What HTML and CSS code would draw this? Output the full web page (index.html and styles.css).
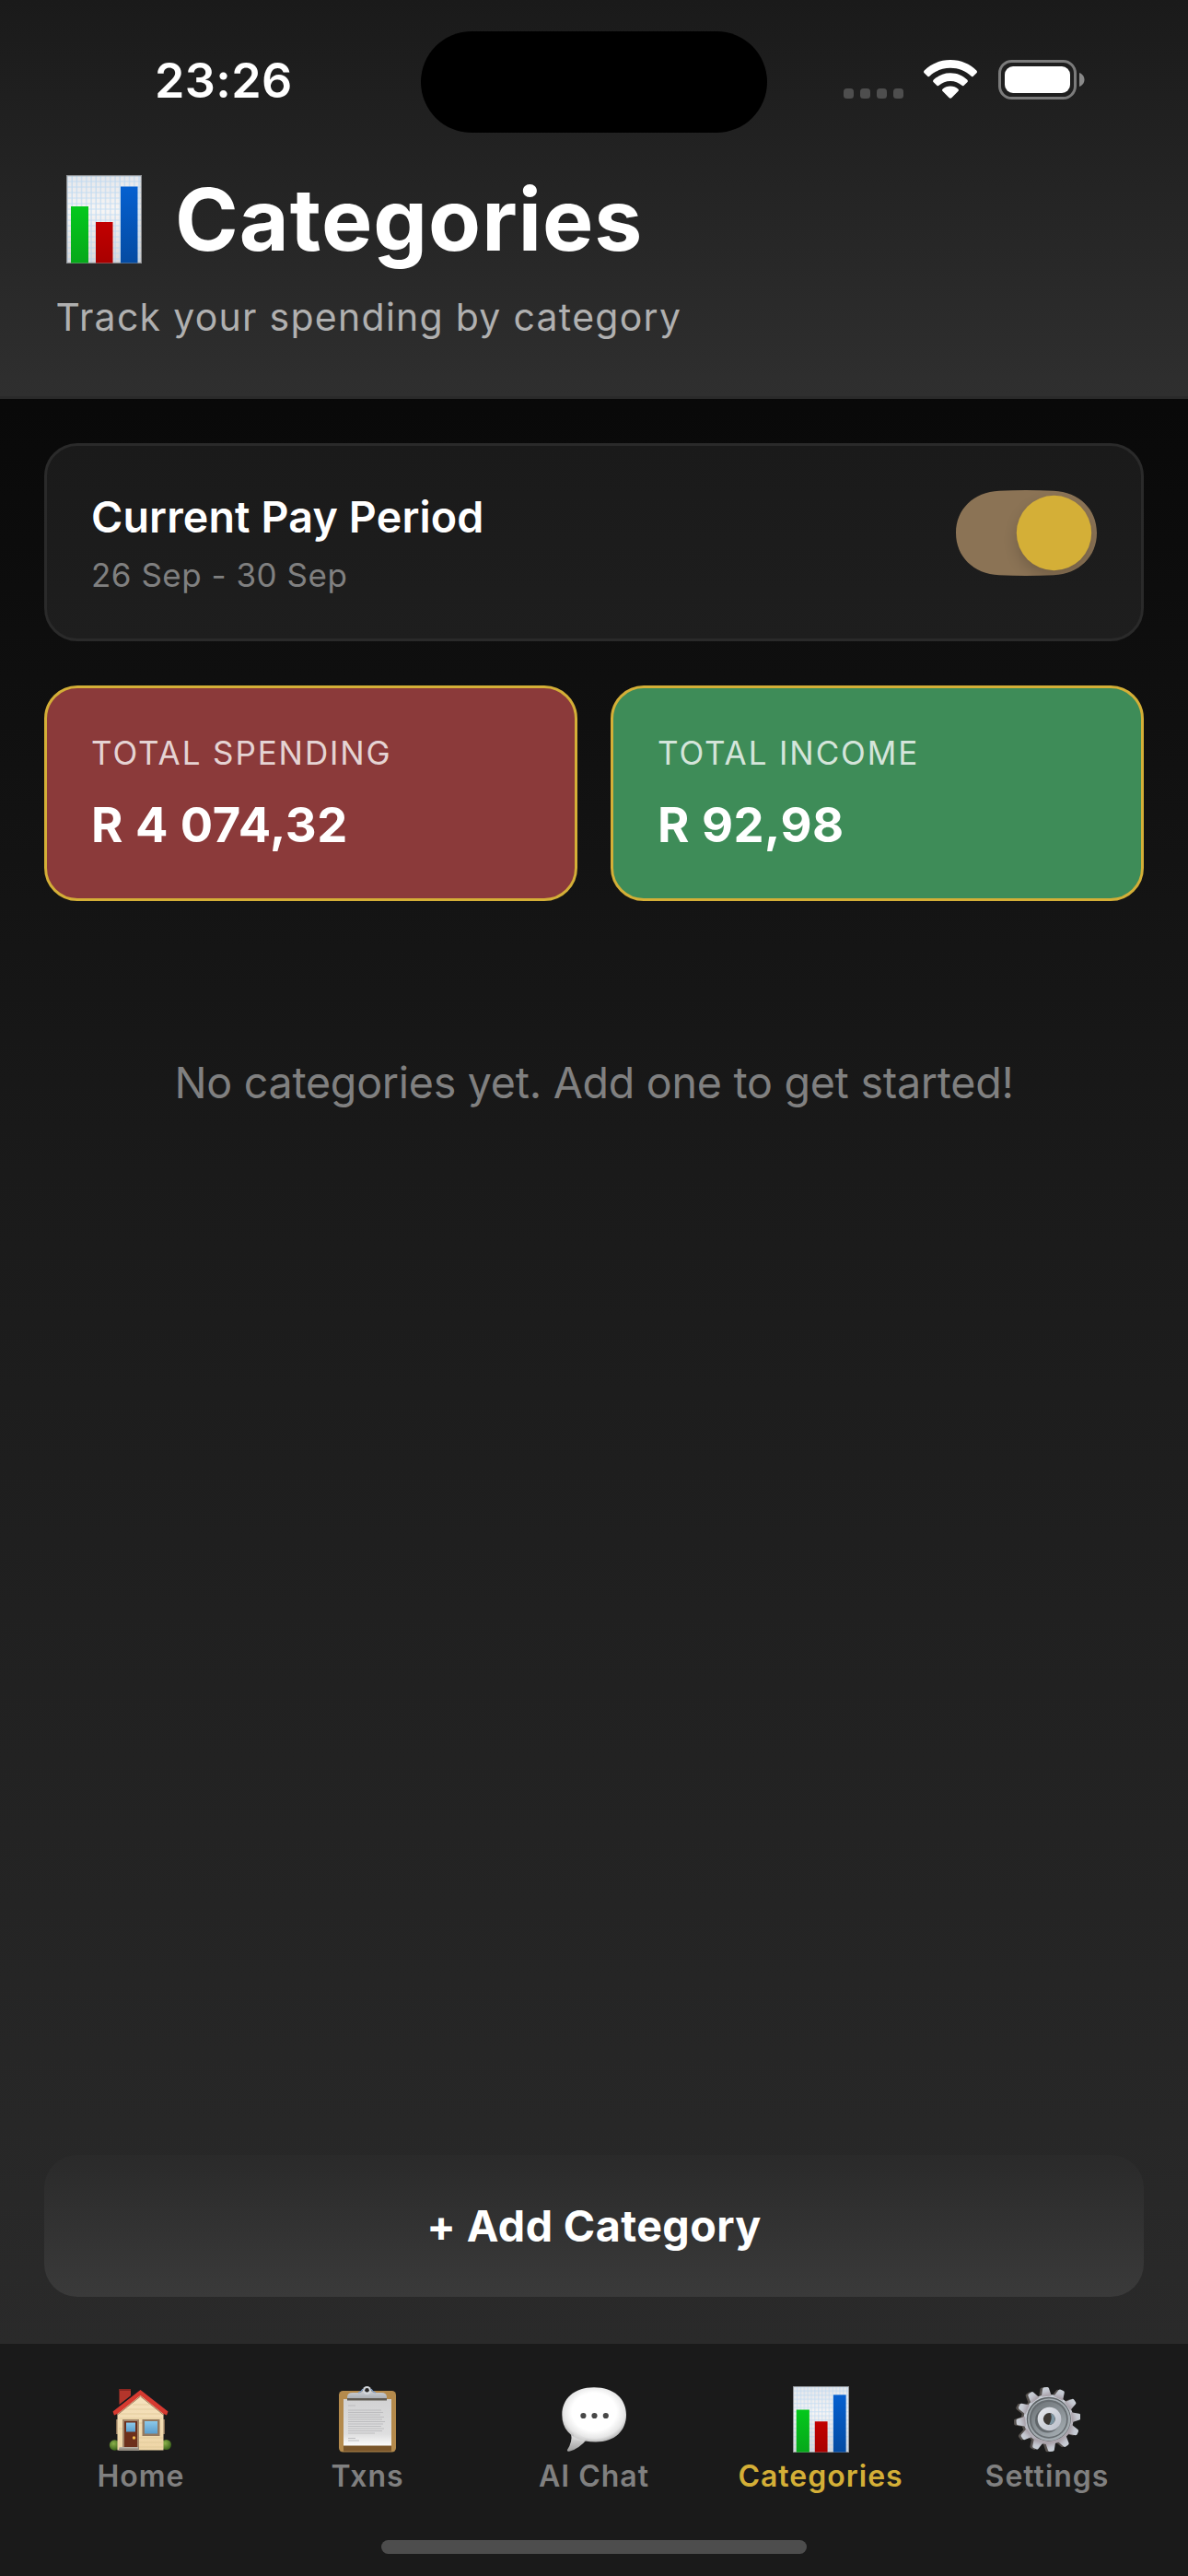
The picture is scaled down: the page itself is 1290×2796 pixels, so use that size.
FILE: index.html
```
<!DOCTYPE html>
<html lang="en">
<head>
<meta charset="utf-8">
<title>Categories</title>
<link rel="stylesheet" href="styles.css">
</head>
<body>
<svg class="defs" width="0" height="0" aria-hidden="true">
  <defs>
    <pattern id="grid" width="5.2" height="6" patternUnits="userSpaceOnUse">
      <path d="M1 0V6M0 1H5.2" stroke="#a9d0f2" stroke-width="1.2" opacity=".6"/>
    </pattern>
    <linearGradient id="paper" x1="0" y1="0" x2="0" y2="1"><stop offset="0" stop-color="#e4e6ea"/><stop offset=".4" stop-color="#f7f5f4"/><stop offset="1" stop-color="#d9d7d9"/></linearGradient>
    <linearGradient id="green" x1="0" y1="0" x2="0" y2="1"><stop offset="0" stop-color="#04c81c"/><stop offset="1" stop-color="#06a81a"/></linearGradient>
    <linearGradient id="red" x1="0" y1="0" x2="0" y2="1"><stop offset="0" stop-color="#c20000"/><stop offset="1" stop-color="#a80000"/></linearGradient>
    <linearGradient id="blue" x1="0" y1="0" x2="0" y2="1"><stop offset="0" stop-color="#0560d0"/><stop offset="1" stop-color="#044ba2"/></linearGradient>
    <symbol id="chart" viewBox="0 0 82 96" preserveAspectRatio="none">
      <rect width="82" height="96" fill="url(#paper)"/>
      <rect width="82" height="96" fill="url(#grid)"/>
      <rect x=".6" y=".6" width="80.8" height="94.8" fill="none" stroke="#8d8f92" stroke-width="1.2"/>
      <rect x="5" y="34" width="19" height="61.5" fill="url(#green)"/>
      <rect x="32" y="51" width="18.5" height="44.5" fill="url(#red)"/>
      <rect x="59" y="12.5" width="18.5" height="83" fill="url(#blue)"/>
    </symbol>
  </defs>
</svg>
<div class="screen">
  <header class="header">
    <div class="status">
      <span class="time">23:26</span>
      <span class="island"></span>
      <div class="indicators">
        <span class="signal"><i></i><i></i><i></i><i></i></span>
        <svg class="wifi" viewBox="0 0 58 42" width="58" height="42" fill="#fff">
          <path d="M29 0C40.500 0 50.500 4.500 57.300 11.600C58.200 12.500 58.200 13.400 57.400 14.200L53.800 17.700C53 18.500 52.200 18.400 51.400 17.600C45.500 12 37.600 8.800 29 8.800S12.500 12 6.600 17.600C5.800 18.400 5 18.500 4.200 17.700L.6 14.200C-.2 13.400-.2 12.500.7 11.600C7.500 4.500 17.500 0 29 0Z"/>
          <path d="M29 14.300C36.200 14.300 42.500 17.100 47.200 21.600C48.100 22.500 48.100 23.400 47.300 24.200L43.700 27.700C42.900 28.500 42.100 28.400 41.200 27.600C38 24.700 33.800 23 29 23S20 24.700 16.800 27.600C15.900 28.400 15.100 28.500 14.300 27.700L10.700 24.200C9.900 23.400 9.900 22.500 10.800 21.600C15.500 17.100 21.800 14.300 29 14.300Z"/>
          <path d="M29 28.400C32.300 28.400 35.200 29.600 37.300 31.600C38.200 32.500 38.200 33.300 37.400 34.100L30.500 41C29.500 42 28.500 42 27.500 41L20.600 34.100C19.800 33.300 19.800 32.500 20.700 31.600C22.800 29.600 25.700 28.400 29 28.400Z"/>
        </svg>
        <svg class="battery" viewBox="0 0 94 43" width="94" height="43">
          <rect x="1.500" y="1.500" width="82" height="40" rx="13" fill="none" stroke="#7b7b7b" stroke-width="3"/>
          <rect x="7" y="7" width="71" height="29" rx="9" fill="#fff"/>
          <path d="M88 14C91 15 93.500 18 93.500 21.500S91 28 88 29Z" fill="#8a8a8a"/>
        </svg>
      </div>
    </div>
    <div class="title-row">
      <svg class="title-icon" width="82" height="96"><use href="#chart"/></svg>
      <h1 class="title">Categories</h1>
    </div>
    <p class="subtitle">Track your spending by category</p>
  </header>

  <main class="content">
    <section class="period">
      <div>
        <h2 class="period-title">Current Pay Period</h2>
        <p class="period-dates">26 Sep - 30 Sep</p>
      </div>
      <svg class="toggle" viewBox="0 0 153 93" width="153" height="93">
        <defs>
          <clipPath id="track"><path d="M47 0.800Q76 -.6 106 .8C134 2 153 21 153 46.500S134 91 106 92.200Q76 93.600 47 92.200C19 91 0 72 0 46.500S19 2 47 .8Z"/></clipPath>
          <filter id="soft" x="-40%" y="-40%" width="180%" height="180%"><feGaussianBlur stdDeviation="8"/></filter>
        </defs>
        <g clip-path="url(#track)">
          <rect width="153" height="93" fill="#8b7355"/>
          <circle cx="106.500" cy="54" r="40" fill="#000" opacity=".18" filter="url(#soft)"/>
          <circle cx="106.500" cy="46.500" r="40.700" fill="#d4af37"/>
        </g>
      </svg>
    </section>
    <section class="stats">
      <div class="stat spending">
        <p class="stat-label">TOTAL SPENDING</p>
        <p class="stat-value">R 4 074,32</p>
      </div>
      <div class="stat income">
        <p class="stat-label">TOTAL INCOME</p>
        <p class="stat-value">R 92,98</p>
      </div>
    </section>
    <p class="empty">No categories yet. Add one to get started!</p>
    <button class="add" type="button">+ Add Category</button>
  </main>

  <nav class="tabs">
    <a class="tab">
      <svg width="72" height="72" viewBox="0 0 72 72">
        <defs>
          <linearGradient id="wall" x1="0" y1="0" x2="0" y2="1"><stop offset="0" stop-color="#f6e3bf"/><stop offset="1" stop-color="#eed5a6"/></linearGradient>
          <linearGradient id="glass" x1="0" y1="0" x2="0" y2="1"><stop offset="0" stop-color="#8cc9ea"/><stop offset="1" stop-color="#5b9dcc"/></linearGradient>
          <radialGradient id="bush" cx=".4" cy=".35" r=".7"><stop offset="0" stop-color="#8ab04a"/><stop offset="1" stop-color="#355d17"/></radialGradient>
        </defs>
        <circle cx="7.500" cy="64" r="5.700" fill="url(#bush)"/><circle cx="63.500" cy="63.500" r="5.500" fill="url(#bush)"/>
        <path d="M12.500 3H25V16L12.500 27Z" fill="#b3352b"/><path d="M12.500 3H25V5H12.500Z" fill="#8b2620"/>
        <path d="M9 36H12V52H9ZM60 36H62V52H60Z" fill="#8a7258"/>
        <path d="M10.500 29L35.500 9L60.500 29V69.500H10.500Z" fill="url(#wall)"/>
        <path d="M27 20H45M20 25H52M13 30H59M13 35H59M32 40H38M12 46H16M34 56H60M34 61H60M34 66H60" stroke="#dcc596" stroke-width=".7"/>
        <path d="M6 25L35.500 2L66 25V28L35.500 5L6 28Z" fill="#191b1f"/>
        <path d="M5.500 27.500L35.500 4L65.500 27.500L64 31.500L60 29.800L35.500 10L11 29.800L7 31.500Z" fill="#d63a30"/>
        <path d="M10.500 31L35.500 11L60.500 31" fill="none" stroke="#9e7657" stroke-width="1"/>
        <rect x="16" y="36" width="18" height="32" fill="#a4886c"/><rect x="18" y="38" width="14" height="28" fill="#6d2f1c"/>
        <rect x="20" y="39.500" width="10" height="10" fill="url(#glass)"/><circle cx="28.500" cy="56" r="1.700" fill="#f5bd4e"/>
        <path d="M13 66H33L34.500 70H11.500Z" fill="#958d82"/><path d="M13 66H33V67.500H12.500Z" fill="#b8b0a5"/>
        <rect x="37.500" y="36" width="19" height="18" fill="#94795f"/><rect x="40" y="38" width="14" height="13.500" fill="url(#glass)"/>
      </svg>
      <span>Home</span>
    </a>
    <a class="tab">
      <svg width="72" height="72" viewBox="0 0 72 72">
        <defs><linearGradient id="sheet" x1="0" y1="0" x2="0" y2="1"><stop offset="0" stop-color="#d2d2d3"/><stop offset=".75" stop-color="#dededf"/><stop offset="1" stop-color="#fbfbfb"/></linearGradient>
        <linearGradient id="clip" x1="0" y1="0" x2="0" y2="1"><stop offset="0" stop-color="#d5d9de"/><stop offset="1" stop-color="#a9adb2"/></linearGradient></defs>
        <rect x="5" y="5" width="62" height="66.500" rx="4.500" fill="#b48a4c"/>
        <rect x="10" y="63" width="52" height="7.500" fill="#79552a"/>
        <rect x="10" y="14" width="52" height="50.500" fill="url(#sheet)"/>
        <g stroke="#bababc" stroke-width=".9"><path d="M15 21H23M15 26H51M15 28.500H53M15 31H50M15 33.500H54M15 36H52M15 38.500H55M15 41H53M15 43.500H51M15 46H54M15 48.500H52M15 51H44M15 56.500H23M15 59H27"/></g>
        <path d="M14 14V12Q14 7 20 7H26Q31 7 32 3H39Q40 7 45 7H51Q57 7 57 12V14Z" fill="url(#clip)"/>
        <path d="M14 13H57V15.500H14Z" fill="#5f5b53"/>
        <circle cx="35.500" cy="4.500" r="4.500" fill="#d3d7dc"/><circle cx="35.500" cy="4.300" r="2.300" fill="#262524"/>
        <path d="M26 7Q30 6 31 3M45 7Q41 6 40 3" fill="none" stroke="#819ec5" stroke-width="1.200"/>
      </svg>
      <span>Txns</span>
    </a>
    <a class="tab">
      <svg width="72" height="72" viewBox="0 0 72 72">
        <defs><radialGradient id="bubble" cx=".5" cy=".45" r=".56"><stop offset=".62" stop-color="#fff"/><stop offset=".86" stop-color="#e6e6e6"/><stop offset="1" stop-color="#b4b4b4"/></radialGradient>
        <linearGradient id="tail" x1="0" y1="0" x2="0" y2="1"><stop offset="0" stop-color="#ececec"/><stop offset="1" stop-color="#9d9d9d"/></linearGradient></defs>
        <path d="M11 51Q13 60 7 69Q6 71.500 10 70.500Q20 67.500 28 58Z" fill="url(#tail)"/>
        <path d="M36 1.300C58 1.300 71 14 71 31C71 48 59 60.500 38 60.500Q31 60.500 26.500 59.500C10 56 1.300 46 1.300 31C1.300 14 14 1.300 36 1.300Z" fill="url(#bubble)"/>
        <path d="M14 49L28 57.500L24 60L14 58Z" fill="#dedede" opacity=".5"/>
        <g fill="#474747"><circle cx="24.400" cy="32" r="3.100"/><circle cx="36.500" cy="32" r="3.100"/><circle cx="48.800" cy="32" r="3.100"/></g>
      </svg>
      <span>AI Chat</span>
    </a>
    <a class="tab active">
      <svg width="61" height="72"><use href="#chart"/></svg>
      <span>Categories</span>
    </a>
    <a class="tab">
      <svg width="72" height="72" viewBox="0 0 72 72">
        <defs>
          <linearGradient id="steel" x1="0" y1="0" x2=".2" y2="1"><stop offset="0" stop-color="#cbd2d9"/><stop offset=".5" stop-color="#c3c6cf"/><stop offset="1" stop-color="#aaa3ab"/></linearGradient>
          <linearGradient id="dish" x1="0" y1="0" x2=".6" y2="1"><stop offset="0" stop-color="#6d7377"/><stop offset="1" stop-color="#9fa7ac"/></linearGradient>
          <linearGradient id="hub" x1="0" y1="0" x2="1" y2="1"><stop offset="0" stop-color="#e7eaee"/><stop offset="1" stop-color="#b9bdc9"/></linearGradient>
          <path id="tooth" d="M-5.500 -25L-3.400 -33.600Q-3 -35 -1.500 -35H1.500Q3 -35 3.400 -33.600L5.500 -25Z"/>
          <g id="gear">
            <circle r="27"/>
            <use href="#tooth"/><use href="#tooth" transform="rotate(30)"/><use href="#tooth" transform="rotate(60)"/><use href="#tooth" transform="rotate(90)"/><use href="#tooth" transform="rotate(120)"/><use href="#tooth" transform="rotate(150)"/><use href="#tooth" transform="rotate(180)"/><use href="#tooth" transform="rotate(210)"/><use href="#tooth" transform="rotate(240)"/><use href="#tooth" transform="rotate(270)"/><use href="#tooth" transform="rotate(300)"/><use href="#tooth" transform="rotate(330)"/>
          </g>
        </defs>
        <g transform="translate(34.800 36.300) rotate(-5)" fill="#57524f"><use href="#gear"/></g>
        <g transform="translate(37.500 36) rotate(-5)" fill="url(#steel)"><use href="#gear"/></g>
        <circle cx="37.800" cy="35.700" r="24" fill="#5d6265"/><circle cx="38.200" cy="36.200" r="23" fill="#a4acb1"/>
        <circle cx="37.800" cy="35.700" r="21" fill="#686e72"/><circle cx="38" cy="36" r="19" fill="url(#dish)"/>
        <circle cx="36.500" cy="37" r="13.500" fill="#484c50" opacity=".6"/>
        <circle cx="38.500" cy="35.500" r="12.800" fill="url(#hub)"/>
        <circle cx="38.300" cy="35.500" r="6.400" fill="#3b3733"/><path d="M40 29.500A6.400 6.400 0 0 1 38 42Q42 36 40 29.500Z" fill="#7d95a3"/>
      </svg>
      <span>Settings</span>
    </a>
    <span class="home-bar"></span>
  </nav>
</div>
</body>
</html>
```
FILE: styles.css
```
* { box-sizing: border-box; margin: 0; padding: 0; }

body {
  background: #000;
  font-family: Inter, "Liberation Sans", sans-serif;
  color: #fff;
}

.defs { position: absolute; }

.screen {
  width: 1290px;
  height: 2796px;
  display: flex;
  flex-direction: column;
  background: linear-gradient(180deg, #000 0, #1a1a1a 1272px, #2a2a2a 2544px);
}

.header {
  height: 433px;
  border-bottom: 3px solid #2a2a2a;
  background: linear-gradient(180deg, #1a1a1a, #2f2f2f);
}

.status {
  height: 178px;
  display: grid;
  grid-template-columns: 457px 376px 457px;
  align-items: center;
}

.time {
  padding-left: 168px;
  font-size: 52px;
  line-height: 60px;
  font-weight: 600;
  letter-spacing: 0.4px;
  margin-bottom: 2px;
}

.island { height: 110px; border-radius: 55px; background: #000; }

.indicators {
  display: flex;
  align-items: flex-end;
  padding-left: 83px;
  height: 43px;
  margin-bottom: 5px;
}

.signal { display: flex; gap: 7px; padding-bottom: 1px; }
.signal i { width: 11px; height: 11px; border-radius: 3.5px; background: #4e4e4e; }
.wifi { margin-left: 22px; margin-bottom: 1px; }
.battery { margin-left: 23px; }

.title-row {
  display: flex;
  align-items: center;
  height: 120px;
  padding-left: 72px;
}

.title {
  margin-left: 36px;
  font-size: 93px;
  line-height: 116px;
  font-weight: 700;
  letter-spacing: 1px;
}

.subtitle {
  margin-top: 21px;
  padding-left: 60.5px;
  font-size: 41px;
  line-height: 50px;
  letter-spacing: 1.27px;
  color: #b0b0b0;
}

.content {
  flex: 1;
  display: flex;
  flex-direction: column;
  padding: 48px 48px 51px;
}

.period {
  display: flex;
  justify-content: space-between;
  align-items: flex-start;
  padding: 48px 48px 47px;
  border: 3px solid #2a2a2a;
  border-radius: 36px;
  background: linear-gradient(180deg, #1a1a1a, #1e1e1e);
}

.period-title { font-size: 46.6px; line-height: 58px; font-weight: 600; letter-spacing: 0.13px; }
.period-dates { margin-top: 12px; font-size: 35px; line-height: 44px; letter-spacing: 0.5px; color: #808080; }

.stats {
  display: grid;
  grid-template-columns: 1fr 1fr;
  gap: 36px;
  margin-top: 48px;
}

.stat {
  height: 234px;
  padding: 48px;
  border: 3px solid #d4af37;
  border-radius: 36px;
}

.spending { background: #8b3a3a; }
.income { background: #3e8c58; }
.stat-label { font-size: 35px; line-height: 44px; letter-spacing: 1.9px; color: rgba(255, 255, 255, 0.8); }
.stat-value { margin-top: 24px; font-size: 52.5px; line-height: 64px; font-weight: 700; letter-spacing: 0.5px; }

.empty {
  margin-top: 168px;
  text-align: center;
  font-size: 46.6px;
  line-height: 58px;
  letter-spacing: -0.28px;
  color: #808080;
}

.add {
  margin-top: auto;
  height: 154px;
  border: 0;
  border-radius: 36px;
  background: linear-gradient(180deg, #2a2a2a, #3a3a3a);
  color: #fff;
  font-family: inherit;
  font-size: 46.6px;
  line-height: 58px;
  font-weight: 700;
  letter-spacing: 0.4px;
}

.tabs {
  height: 252px;
  display: grid;
  grid-template-columns: repeat(5, 246px);
  grid-template-rows: 213px 15px;
  justify-content: center;
  background: #1a1a1a;
}

.tab {
  display: flex;
  flex-direction: column;
  align-items: center;
  padding-top: 46px;
  font-size: 32px;
  line-height: 40px;
  font-weight: 600;
  letter-spacing: 1px;
  color: #808080;
}

.tab span { margin-top: 6px; }
.active { color: #d4af37; }

.home-bar {
  grid-column: 1 / -1;
  justify-self: center;
  width: 462px;
  border-radius: 8px;
  background: #4d4d4d;
}
```
